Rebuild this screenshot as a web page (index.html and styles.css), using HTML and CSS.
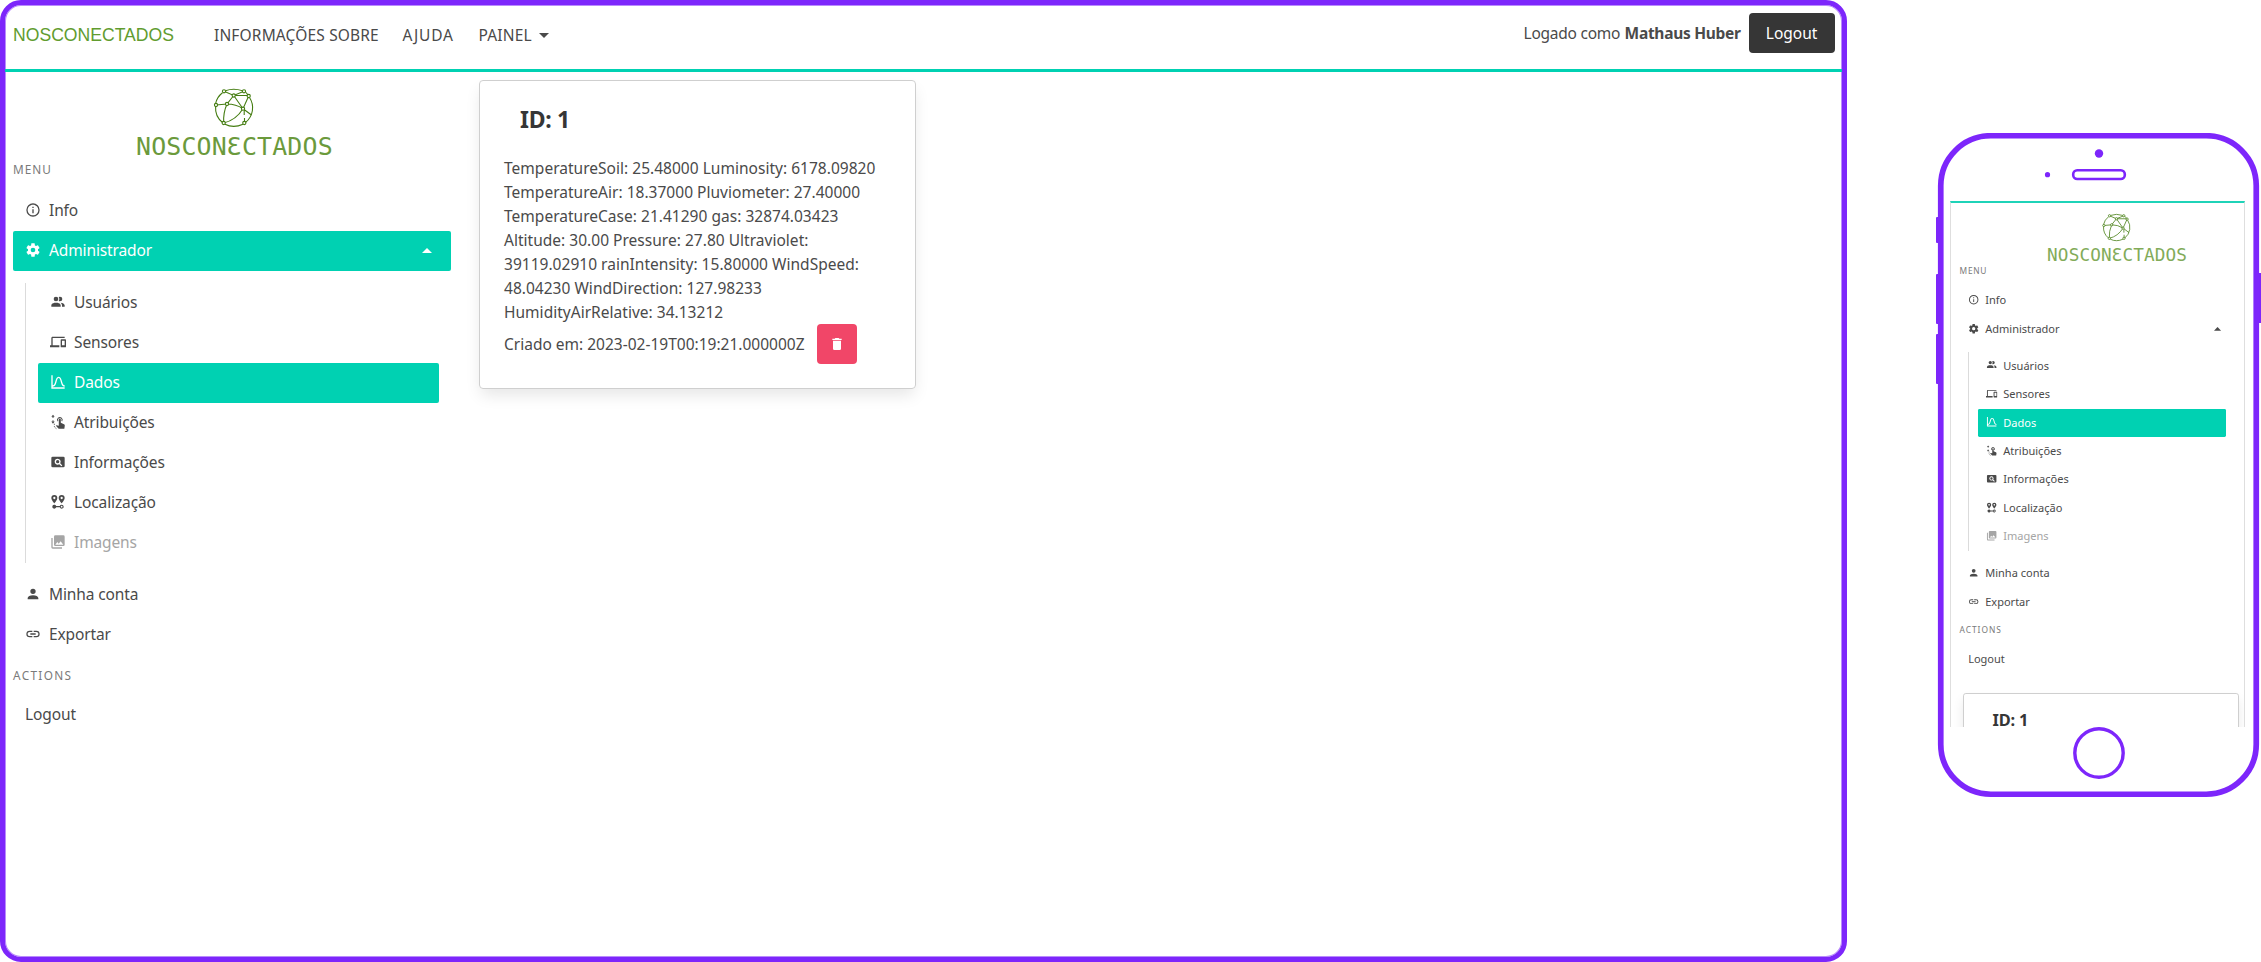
FILE: index.html
```
<!DOCTYPE html>
<html lang="pt-BR">
<head>
<meta charset="utf-8">
<title>NOSCONECTADOS</title>
<link rel="stylesheet" href="styles.css">
</head>
<body>
<svg class="sprite" aria-hidden="true">
  <symbol id="i-info" viewBox="0 0 24 24"><path d="M11,9H13V7H11M12,20C7.59,20 4,16.41 4,12C4,7.59 7.59,4 12,4C16.41,4 20,7.59 20,12C20,16.41 16.41,20 12,20M12,2A10,10 0 0,0 2,12A10,10 0 0,0 12,22A10,10 0 0,0 22,12A10,10 0 0,0 12,2M11,17H13V11H11V17Z"/></symbol>
  <symbol id="i-cog" viewBox="0 0 24 24"><path d="M12,15.5A3.5,3.5 0 0,1 8.5,12A3.5,3.5 0 0,1 12,8.5A3.5,3.5 0 0,1 15.5,12A3.5,3.5 0 0,1 12,15.5M19.43,12.97C19.47,12.65 19.5,12.33 19.5,12C19.5,11.67 19.47,11.34 19.43,11L21.54,9.37C21.73,9.22 21.78,8.95 21.66,8.73L19.66,5.27C19.54,5.05 19.27,4.96 19.05,5.05L16.56,6.05C16.04,5.66 15.5,5.32 14.87,5.07L14.5,2.42C14.46,2.18 14.25,2 14,2H10C9.75,2 9.54,2.18 9.5,2.42L9.13,5.07C8.5,5.32 7.96,5.66 7.44,6.05L4.95,5.05C4.73,4.96 4.46,5.05 4.34,5.27L2.34,8.73C2.21,8.95 2.27,9.22 2.46,9.37L4.57,11C4.53,11.34 4.5,11.67 4.5,12C4.5,12.33 4.53,12.65 4.57,12.97L2.46,14.63C2.27,14.78 2.21,15.05 2.34,15.27L4.34,18.73C4.46,18.95 4.73,19.03 4.95,18.95L7.44,17.94C7.96,18.34 8.5,18.68 9.13,18.93L9.5,21.58C9.54,21.82 9.75,22 10,22H14C14.25,22 14.46,21.82 14.5,21.58L14.87,18.93C15.5,18.67 16.04,18.34 16.56,17.94L19.05,18.95C19.27,19.03 19.54,18.95 19.66,18.73L21.66,15.27C21.78,15.05 21.73,14.78 21.54,14.63L19.43,12.97Z"/></symbol>
  <symbol id="i-users" viewBox="0 0 24 24"><path d="M16 17V19H2V17S2 13 9 13 16 17 16 17M12.5 7.5A3.5 3.5 0 1 0 9 11A3.5 3.5 0 0 0 12.5 7.5M15.94 13A5.32 5.32 0 0 1 18 17V19H22V17S22 13.37 15.94 13M15 4A3.39 3.39 0 0 0 13.07 4.59A5 5 0 0 1 13.07 10.41A3.39 3.39 0 0 0 15 11A3.5 3.5 0 0 0 15 4Z"/></symbol>
  <symbol id="i-devices" viewBox="0 0 24 24"><path d="M4 6h18V4H4c-1.1 0-2 .9-2 2v11H0v3h14v-3H4V6zm19 2h-6c-.55 0-1 .45-1 1v10c0 .55.45 1 1 1h6c.55 0 1-.45 1-1V9c0-.55-.45-1-1-1zm-1 9h-4v-7h4v7z"/></symbol>
  <symbol id="i-curve" viewBox="0 0 24 24"><path d="M9.96,11.31C10.82,8.1 11.5,6 13,6C14.5,6 15.18,8.1 16.04,11.31C17,14.92 18.1,19 22,19V17C19.8,17 19,14.54 17.97,10.8C17.08,7.46 16.15,4 13,4C9.85,4 8.92,7.46 8.03,10.8C7.03,14.54 6.2,17 4,17V2H2V22H22V20H4V19C7.9,19 9,14.92 9.96,11.31Z"/></symbol>
  <symbol id="i-gesture" viewBox="0 0 24 24"><path d="M4.5 1L2 4.2H3.8V6H5.2V4.2H7ZM4.5 14.5L7 11.3H5.2V9.5H3.8V11.3H2Z"/><path d="M11.3 11.2A4.2 4.2 0 1 1 18.2 11.2L17 10.2A2.7 2.7 0 1 0 12.5 10.2Z"/><path d="M13.2 8.3A1.5 1.5 0 0 1 16.2 8.3V13L21 15.2Q22.3 15.9 22.2 17.2L21.5 22H13L8.8 17.7L9.8 16.7L13.2 17.6Z"/><path d="M7.5 14.5Q5.8 15.6 6.4 18Q7 20.6 9.6 22" fill="none" stroke="currentColor" stroke-width="1.3" stroke-dasharray="2.2 1.4"/></symbol>
  <symbol id="i-search" viewBox="0 0 24 24"><path fill-rule="evenodd" d="M4 4H20A2 2 0 0 1 22 6V18A2 2 0 0 1 20 20H4A2 2 0 0 1 2 18V6A2 2 0 0 1 4 4ZM11.5 7A4.5 4.5 0 1 0 13.9 15.3L17.1 18.5L18.5 17.1L15.3 13.9A4.5 4.5 0 0 0 11.5 7ZM11.5 9A2.5 2.5 0 1 1 11.5 14A2.5 2.5 0 0 1 11.5 9Z"/></symbol>
  <symbol id="i-pins" viewBox="0 0 24 24"><path fill-rule="evenodd" d="M6.5 1.5A4.5 4.5 0 0 1 11 6C11 9 6.5 14 6.5 14S2 9 2 6A4.5 4.5 0 0 1 6.5 1.5M6.5 4.3A1.7 1.7 0 1 0 6.5 7.7A1.7 1.7 0 1 0 6.5 4.3M17.5 1.5A4.5 4.5 0 0 1 22 6C22 9 17.5 14 17.5 14S13 9 13 6A4.5 4.5 0 0 1 17.5 1.5M17.5 4.3A1.7 1.7 0 1 0 17.5 7.7A1.7 1.7 0 1 0 17.5 4.3M17.5 16A3 3 0 1 1 14.7 20H9.3A3 3 0 1 1 9.3 18H14.7A3 3 0 0 1 17.5 16M17.5 17.7A1.3 1.3 0 1 0 17.5 20.3A1.3 1.3 0 1 0 17.5 17.7"/></symbol>
  <symbol id="i-images" viewBox="0 0 24 24"><path d="M22,16V4A2,2 0 0,0 20,2H8A2,2 0 0,0 6,4V16A2,2 0 0,0 8,18H20A2,2 0 0,0 22,16M11,12L13.03,14.71L16,11L20,16H8M2,6V20A2,2 0 0,0 4,22H18V20H4V6"/></symbol>
  <symbol id="i-user" viewBox="0 0 24 24"><path d="M12,4A4,4 0 0,1 16,8A4,4 0 0,1 12,12A4,4 0 0,1 8,8A4,4 0 0,1 12,4M12,14C16.42,14 20,15.79 20,18V20H4V18C4,15.79 7.58,14 12,14Z"/></symbol>
  <symbol id="i-link" viewBox="0 0 24 24"><path d="M3.9,12C3.9,10.29 5.29,8.9 7,8.9H11V7H7A5,5 0 0,0 2,12A5,5 0 0,0 7,17H11V15.1H7C5.29,15.1 3.9,13.71 3.9,12M8,13H16V11H8V13M17,7H13V8.9H17C18.71,8.9 20.1,10.29 20.1,12C20.1,13.71 18.71,15.1 17,15.1H13V17H17A5,5 0 0,0 22,12A5,5 0 0,0 17,7Z"/></symbol>
  <symbol id="i-trash" viewBox="0 0 24 24"><path d="M19,4H15.5L14.5,3H9.5L8.5,4H5V6H19M6,19A2,2 0 0,0 8,21H16A2,2 0 0,0 18,19V7H6V19Z"/></symbol>
  <symbol id="i-up" viewBox="0 0 24 24"><path d="M7,15L12,10L17,15H7Z"/></symbol>
  <symbol id="i-down" viewBox="0 0 24 24"><path d="M7,10L12,15L17,10H7Z"/></symbol>
  <symbol id="globe" viewBox="0 0 44 44">
    <g fill="none" stroke="#457d12" stroke-width="1.1">
      <path d="M10.5 6.8A18.700 18.700 0 0 0 3.6 17.500M3.600 20.500A18.700 18.700 0 0 0 10.500 36.500M13 38.200Q21.500 42.500 31 38.200M33.500 36.500A18.700 18.700 0 0 0 37.500 11.500M13.500 4.800Q21.500 1.800 30.500 4.800M33.500 6L36 8.800"/>
      <path d="M12 5.300L21.700 9.500L32 5.300M21.700 9.500H36.700M21.700 9.500L15 18L4 19M21.700 9.500L31 22.700L36.700 10M15 18Q24 18 31 22.700L39.500 29M15 18Q11 27 11.700 37Q24 34 31 22.700M32.200 24.500V29M32.500 32V36"/>
    </g>
    <g fill="#fff" stroke="#457d12" stroke-width="1.1">
      <circle cx="12" cy="5.300" r="1.600"/><circle cx="32" cy="5.300" r="1.600"/><circle cx="21.700" cy="9.500" r="1.600"/><circle cx="36.700" cy="10" r="1.600"/><circle cx="15" cy="18" r="1.600"/><circle cx="4" cy="19" r="1.600"/><circle cx="31" cy="22.700" r="1.600"/><circle cx="11.700" cy="37" r="1.600"/><circle cx="32.300" cy="37" r="1.600"/>
    </g>
  </symbol>
</svg>

<div class="stage">
  <section class="window">
    <header class="topbar">
      <nav class="nav">
        <a class="brand">NOSCONECTADOS</a>
        <a class="nav-about">INFORMAÇÕES SOBRE</a>
        <a class="nav-help">AJUDA</a>
        <a class="nav-panel">PAINEL<svg class="caret"><use href="#i-down"/></svg></a>
      </nav>
      <div class="session">
        <span class="who">Logado como</span><b class="who-name">Mathaus Huber</b>
        <a class="btn-dark">Logout</a>
      </div>
    </header>
    <div class="content">
      <aside class="menu">
        <div class="logo"><svg class="logo-mark"><use href="#globe"/></svg><div class="logo-word">NOSCONƐCTADOS</div></div>
        <p class="label first">MENU</p>
        <a class="item"><svg class="ic"><use href="#i-info"/></svg>Info</a>
        <a class="item active"><svg class="ic"><use href="#i-cog"/></svg>Administrador<svg class="caret end"><use href="#i-up"/></svg></a>
        <div class="sub">
          <a class="item"><svg class="ic"><use href="#i-users"/></svg>Usuários</a>
          <a class="item"><svg class="ic"><use href="#i-devices"/></svg>Sensores</a>
          <a class="item active"><svg class="ic"><use href="#i-curve"/></svg>Dados</a>
          <a class="item"><svg class="ic"><use href="#i-gesture"/></svg>Atribuições</a>
          <a class="item"><svg class="ic"><use href="#i-search"/></svg>Informações</a>
          <a class="item"><svg class="ic"><use href="#i-pins"/></svg>Localização</a>
          <a class="item disabled"><svg class="ic"><use href="#i-images"/></svg>Imagens</a>
        </div>
        <a class="item"><svg class="ic"><use href="#i-user"/></svg>Minha conta</a>
        <a class="item"><svg class="ic"><use href="#i-link"/></svg>Exportar</a>
        <p class="label actions">ACTIONS</p>
        <a class="item">Logout</a>
      </aside>
      <article class="card">
        <h2>ID: 1</h2>
        <p class="data">TemperatureSoil: 25.48000 Luminosity: 6178.09820<br>TemperatureAir: 18.37000 Pluviometer: 27.40000<br>TemperatureCase: 21.41290 gas: 32874.03423<br>Altitude: 30.00 Pressure: 27.80 Ultraviolet:<br>39119.02910 rainIntensity: 15.80000 WindSpeed:<br>48.04230 WindDirection: 127.98233<br>HumidityAirRelative: 34.13212</p>
        <div class="created"><span>Criado em: 2023-02-19T00:19:21.000000Z</span><a class="btn-del"><svg class="ic"><use href="#i-trash"/></svg></a></div>
      </article>
    </div>
  </section>

  <section class="phone">
    <svg class="frame" viewBox="0 0 327 666">
      <g fill="#7d26fb">
        <rect x="0" y="84" width="5" height="26" rx="1"/><rect x="0" y="141" width="5" height="50" rx="1"/><rect x="0" y="201" width="5" height="50" rx="1"/><rect x="321" y="140" width="4.500" height="50" rx="1"/>
        <circle cx="163" cy="20.500" r="4.200"/><circle cx="111.500" cy="41.700" r="2.600"/>
      </g>
      <g fill="none" stroke="#7d26fb">
        <rect x="4.750" y="2.750" width="315.500" height="658.500" rx="50" stroke-width="5.700"/>
        <rect x="137.200" y="37.200" width="51.600" height="8.800" rx="4" stroke-width="2.600"/>
        <circle cx="163" cy="620" r="24.200" stroke-width="3.400"/>
      </g>
    </svg>
    <div class="screen">
      <div class="mobile">
        <aside class="menu">
          <div class="logo"><svg class="logo-mark"><use href="#globe"/></svg><div class="logo-word">NOSCONƐCTADOS</div></div>
          <p class="label first">MENU</p>
          <a class="item"><svg class="ic"><use href="#i-info"/></svg>Info</a>
          <a class="item"><svg class="ic"><use href="#i-cog"/></svg>Administrador<svg class="caret end"><use href="#i-up"/></svg></a>
          <div class="sub">
            <a class="item"><svg class="ic"><use href="#i-users"/></svg>Usuários</a>
            <a class="item"><svg class="ic"><use href="#i-devices"/></svg>Sensores</a>
            <a class="item active"><svg class="ic"><use href="#i-curve"/></svg>Dados</a>
            <a class="item"><svg class="ic"><use href="#i-gesture"/></svg>Atribuições</a>
            <a class="item"><svg class="ic"><use href="#i-search"/></svg>Informações</a>
            <a class="item"><svg class="ic"><use href="#i-pins"/></svg>Localização</a>
            <a class="item disabled"><svg class="ic"><use href="#i-images"/></svg>Imagens</a>
          </div>
          <a class="item"><svg class="ic"><use href="#i-user"/></svg>Minha conta</a>
          <a class="item"><svg class="ic"><use href="#i-link"/></svg>Exportar</a>
          <p class="label actions">ACTIONS</p>
          <a class="item">Logout</a>
        </aside>
        <article class="card"><h2>ID: 1</h2></article>
      </div>
    </div>
  </section>
</div>
</body>
</html>
```
FILE: styles.css
```
* { box-sizing: border-box; }
body {
  margin: 0;
  overflow: hidden;
  background: #fff;
  color: #4a4a4a;
  font: 15.5px/24px "Noto Sans", "Open Sans", sans-serif;
}
p, h2 { margin: 0; }
svg { display: block; fill: currentColor; }
.sprite { display: none; }
.stage { display: flex; height: 962px; }

/* desktop window */
.window {
  width: 1847px;
  height: 962px;
  border: 5px solid #7d26fb;
  border-radius: 21px;
  box-shadow: inset 0 0 0 1px #b98bfc;
  overflow: hidden;
}
.topbar {
  display: flex;
  justify-content: space-between;
  align-items: flex-start;
  height: 67px;
  padding: 8px 7px 0 8px;
  border-bottom: 3px solid #00d1b2;
}
.nav { display: flex; padding-top: 10px; white-space: nowrap; }
.brand { width: 201px; color: #619c2f; font: 17.6px/24px "Liberation Sans", Arial, sans-serif; }
.nav-about { width: 188.5px; letter-spacing: .16px; }
.nav-help { width: 76px; letter-spacing: .8px; }
.nav-panel { display: flex; letter-spacing: .15px; }
.caret { width: 24px; height: 24px; flex: none; }
.session { display: flex; align-items: center; white-space: nowrap; }
.who { width: 101px; letter-spacing: -.25px; }
.who-name { width: 124px; letter-spacing: -.28px; }
.btn-dark {
  width: 86px;
  height: 40px;
  border-radius: 4px;
  background: #363636;
  color: #fff;
  line-height: 40px;
  text-align: center;
}
.content { display: flex; align-items: flex-start; gap: 28px; padding-left: 8px; }

/* side menu */
.menu { width: 438px; }
.logo { height: 86px; padding-top: 14px; }
.logo-mark { width: 44px; height: 44px; margin-left: 199px; }
.logo-word {
  height: 28px;
  margin: 3px 0 0 123px;
  color: #6b9a3c;
  font: 24.9px/28px "DejaVu Sans Mono", monospace;
  letter-spacing: .15px;
  white-space: nowrap;
}
.label { color: #7a7a7a; font-size: 11.8px; line-height: 20px; }
.first { padding: 1px 0 12px; letter-spacing: 1px; }
.actions { padding: 9.5px 0 10.5px; letter-spacing: 1.35px; }
.item {
  display: flex;
  align-items: center;
  height: 40px;
  padding: 0 12px 2px;
  border-radius: 2px;
  letter-spacing: -.12px;
}
.item.active { background: #00d1b2; color: #fff; }
.item.disabled { color: #a5a5a5; }
.ic { width: 16px; height: 16px; margin-right: 8px; flex: none; }
.end { margin-left: auto; }
.sub { margin: 12px; padding-left: 12px; border-left: 1px solid #dbdbdb; }

/* data card */
.card {
  width: 437px;
  margin-top: 8px;
  padding: 24px;
  border: 1px solid #cfcfcf;
  border-radius: 4px;
  box-shadow: 0 8px 16px -2px rgba(10, 10, 10, .1);
}
.card h2 {
  height: 51px;
  padding-left: 16px;
  color: #363636;
  font-size: 23px;
  font-weight: 700;
  line-height: 28px;
  letter-spacing: -.3px;
}
.data { white-space: nowrap; letter-spacing: .02px; }
.created { display: flex; align-items: center; white-space: nowrap; }
.btn-del {
  display: flex;
  align-items: center;
  justify-content: center;
  width: 40px;
  height: 40px;
  margin-left: 12px;
  border-radius: 4px;
  background: #f14668;
  color: #fff;
}
.btn-del .ic { margin: 0; }

/* phone */
.phone {
  position: relative;
  width: 325.5px;
  height: 666px;
  margin: 133px 0 0 89px;
  padding: 68px 0 0 14.5px;
}
.frame { position: absolute; left: 0; top: 0; width: 327px; height: 666px; }
.screen {
  width: 294.5px;
  height: 526px;
  overflow: hidden;
  border: 1px solid #dedede;
  border-top: 2px solid #1fd3b8;
  border-bottom: 0;
}
.mobile { zoom: .7115; padding-left: 12px; }
.mobile .menu { width: 387px; }
.mobile .logo { height: 85px; padding-top: 13px; }
.mobile .first { padding-bottom: 11px; }
.mobile .card { width: 387px; height: 120px; margin: 28px 0 0 5px; }
.mobile .logo-word { color: #82ab59; }
.mobile .item { letter-spacing: 0; }
```
